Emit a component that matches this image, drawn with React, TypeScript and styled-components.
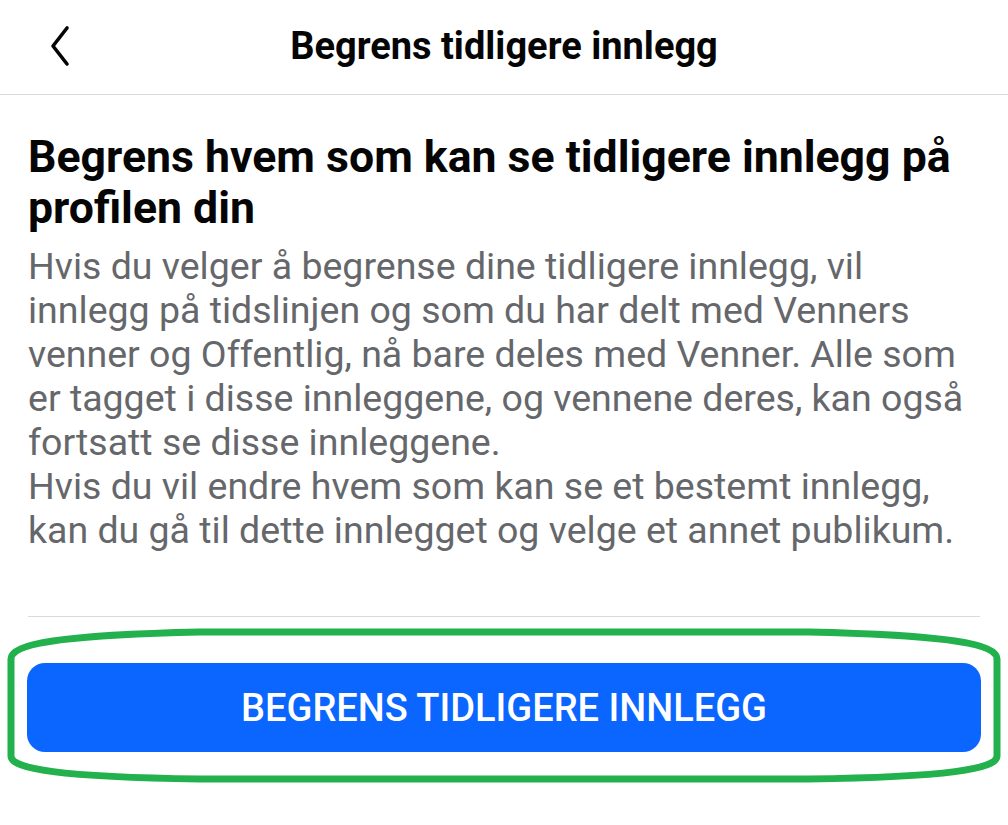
import React from "react";
import styled, { createGlobalStyle } from "styled-components";

const GlobalStyle = createGlobalStyle`
  html, body {
    margin: 0;
    padding: 0;
    background: #ffffff;
    font-family: Roboto, "Liberation Sans", Arial, sans-serif;
  }
`;

const Screen = styled.div`
  width: 1008px;
  height: 825px;
  background: #ffffff;
  display: flex;
  flex-direction: column;
  overflow: hidden;
`;

const Header = styled.header`
  height: 94px;
  border-bottom: 1.5px solid #dadade;
  display: flex;
  align-items: center;
  position: relative;
  justify-content: center;
`;

const BackButton = styled.button`
  position: absolute;
  left: 40px;
  top: 23px;
  width: 40px;
  height: 46px;
  border: none;
  background: none;
  padding: 0;
  display: flex;
  align-items: center;
  justify-content: center;
`;

const HeaderTitle = styled.h1`
  margin: 0;
  margin-top: -2px;
  font-size: 38px;
  font-weight: 700;
  color: #050505;
`;

const Body = styled.main`
  padding: 37px 28px 0 28px;
  display: flex;
  flex-direction: column;
`;

const Heading = styled.h2`
  margin: 0;
  font-size: 44.6px;
  line-height: 51px;
  font-weight: 700;
  color: #050505;
  white-space: nowrap;
`;

const Paragraph = styled.p`
  margin: 10px 0 0 0;
  font-size: 37.5px;
  line-height: 44px;
  color: #65676b;
  white-space: nowrap;
`;

const Divider = styled.hr`
  margin: 64px 0 0 0;
  border: none;
  border-top: 1.5px solid #dadade;
`;

const ButtonArea = styled.div`
  position: relative;
  margin-top: 46px;
`;

const PrimaryButton = styled.button`
  width: 954px;
  margin-left: -1px;
  height: 89px;
  border: none;
  border-radius: 18px;
  background: #0a66ff;
  color: #ffffff;
  font-family: Roboto, "Liberation Sans", Arial, sans-serif;
  font-size: 38px;
  font-weight: 500;
  display: flex;
  align-items: center;
  justify-content: center;
  padding: 0;
`;

const Annotation = styled.svg`
  position: absolute;
  left: -28px;
  top: -44px;
  pointer-events: none;
`;

export default function App() {
  return (
    <Screen>
      <GlobalStyle />
      <Header>
        <BackButton aria-label="Tilbake">
          <svg width="30" height="42" viewBox="0 0 30 42">
            <path
              d="M22 3 L8 21 L22 39"
              fill="none"
              stroke="#050505"
              strokeWidth="3.6"
              strokeLinecap="round"
              strokeLinejoin="round"
            />
          </svg>
        </BackButton>
        <HeaderTitle>Begrens tidligere innlegg</HeaderTitle>
      </Header>
      <Body>
        <Heading>
          Begrens hvem som kan se tidligere innlegg på
          <br />
          profilen din
        </Heading>
        <Paragraph>
          Hvis du velger å begrense dine tidligere innlegg, vil
          <br />
          innlegg på tidslinjen og som du har delt med Venners
          <br />
          venner og Offentlig, nå bare deles med Venner. Alle som
          <br />
          er tagget i disse innleggene, og vennene deres, kan også
          <br />
          fortsatt se disse innleggene.
          <br />
          Hvis du vil endre hvem som kan se et bestemt innlegg,
          <br />
          kan du gå til dette innlegget og velge et annet publikum.
        </Paragraph>
        <Divider />
        <ButtonArea>
          <PrimaryButton>BEGRENS TIDLIGERE INNLEGG</PrimaryButton>
          <Annotation width="1008" height="170" viewBox="0 0 1008 170">
            <path
              d="M11 137 L11 40 C11 25 60 16 200 13 L808 13 C948 16 997 25 997 40 L997 137 C997 150 948 158 808 160 L200 160 C60 158 11 150 11 137 Z"
              fill="none"
              stroke="#22b14c"
              strokeWidth="7"
            />
          </Annotation>
        </ButtonArea>
      </Body>
    </Screen>
  );
}
